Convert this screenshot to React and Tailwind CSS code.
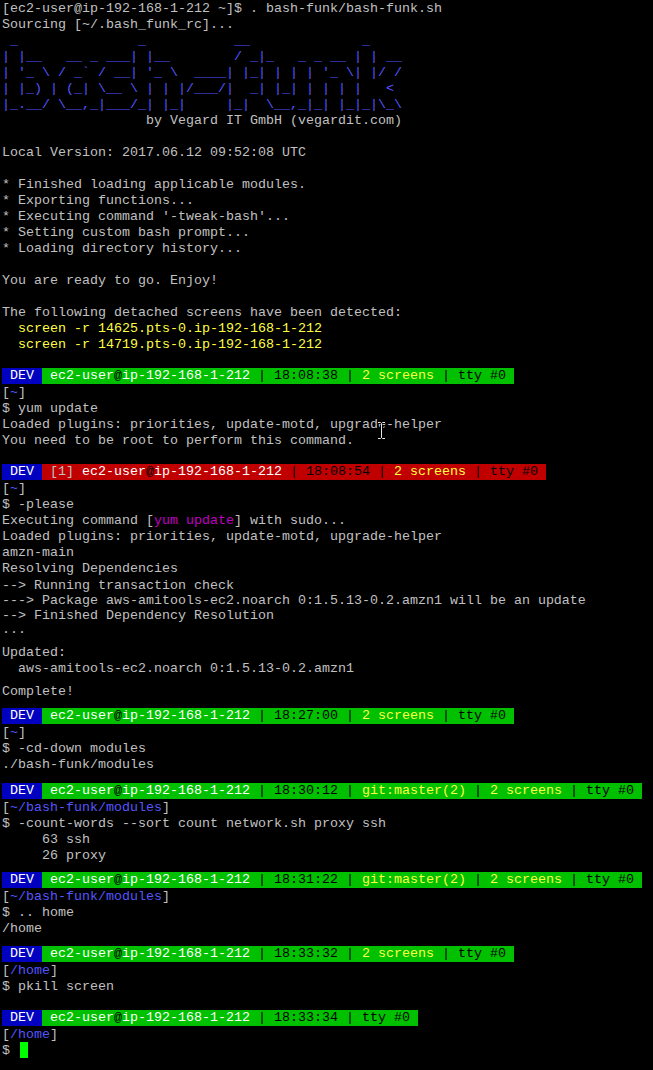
import React from 'react';

var GREY = 'text-[#c0c0c0]';
var BLUE = 'text-[#5555ff]';
var YELLOW = 'text-[#ffff40]';

var ART = [
  ' _               _           __              _    ',
  '| |__   __ _ ___| |__        / _|_   _ _ __ | | __',
  "| '_ \\ / _` / __| '_ \\  ____| |_| | | | '_ \\| |/ /",
  '| |_) | (_| \\__ \\ | | |/___/|  _| |_| | | | |   < ',
  '|_.__/ \\__,_|___/_| |_|     |_|  \\__,_|_| |_|_|\\_\\',
];

function Line({ h, children, className }) {
  return (
    <div className={'whitespace-pre pt-[1px] ' + (h || 'h-[16px]') + ' ' + (className || GREY)}>
      {children}
    </div>
  );
}

function Path({ dir }) {
  return (
    <Line>
      [<span className={BLUE}>{dir}</span>]
    </Line>
  );
}

function Bar({ time, git, screens, job, red }) {
  return (
    <div className="flex h-[16px] whitespace-pre">
      <span className="bg-[#0000c0] text-white"> DEV </span>
      <span className={red ? 'bg-[#c00000]' : 'bg-[#00c000]'}>
        {job && <span className={GREY}> [1]</span>}
        <span className="text-white"> ec2-user</span>
        <span className="text-black">@</span>
        <span className="text-white">ip-192-168-1-212</span>
        <span className="text-black">{' | ' + time + ' | '}</span>
        {git && <span className={YELLOW}>git:master(2)</span>}
        {git && <span className="text-black"> | </span>}
        {screens && <span className={YELLOW}>2 screens</span>}
        {screens && <span className="text-black"> | </span>}
        <span className="text-black">tty #0 </span>
      </span>
    </div>
  );
}

export default function App() {
  return (
    <div
      className="relative w-[653px] h-[1070px] overflow-hidden bg-black pl-[2px] text-[13.33px] leading-[16px]"
      style={{ fontFamily: '"Liberation Mono", "DejaVu Sans Mono", monospace' }}
    >
      <Line>[ec2-user@ip-192-168-1-212 ~]$ . bash-funk/bash-funk.sh</Line>
      <Line>Sourcing [~/.bash_funk_rc]...</Line>
      {ART.map(function(row, i) {
        return <Line key={i} className={BLUE}>{row}</Line>;
      })}
      <Line>{'                  by Vegard IT GmbH (vegardit.com)'}</Line>
      <Line />
      <Line>Local Version: 2017.06.12 09:52:08 UTC</Line>
      <Line />
      <Line>* Finished loading applicable modules.</Line>
      <Line>* Exporting functions...</Line>
      <Line>* Executing command '-tweak-bash'...</Line>
      <Line>* Setting custom bash prompt...</Line>
      <Line>* Loading directory history...</Line>
      <Line />
      <Line>You are ready to go. Enjoy!</Line>
      <Line />
      <Line>The following detached screens have been detected:</Line>
      <Line className={YELLOW}>{'  screen -r 14625.pts-0.ip-192-168-1-212'}</Line>
      <Line className={YELLOW}>{'  screen -r 14719.pts-0.ip-192-168-1-212'}</Line>
      <Line />

      <Bar time="18:08:38" screens />
      <Path dir="~" />
      <Line>$ yum update</Line>
      <Line>Loaded plugins: priorities, update-motd, upgrade-helper</Line>
      <Line>You need to be root to perform this command.</Line>
      <Line />

      <Bar time="18:08:54" screens job red />
      <Path dir="~" />
      <Line>$ -please</Line>
      <Line>
        Executing command [<span className="text-[#c000c0]">yum update</span>] with sudo...
      </Line>
      <Line>Loaded plugins: priorities, update-motd, upgrade-helper</Line>
      <Line>amzn-main</Line>
      <Line h="h-[17px]">Resolving Dependencies</Line>
      <Line h="h-[15px]">--&gt; Running transaction check</Line>
      <Line h="h-[15px]">---&gt; Package aws-amitools-ec2.noarch 0:1.5.13-0.2.amzn1 will be an update</Line>
      <Line h="h-[14px]">--&gt; Finished Dependency Resolution</Line>
      <Line h="h-[23px]">...</Line>
      <Line>Updated:</Line>
      <Line h="h-[23px]">{'  aws-amitools-ec2.noarch 0:1.5.13-0.2.amzn1'}</Line>
      <Line h="h-[25px]">Complete!</Line>

      <Bar time="18:27:00" screens />
      <Path dir="~" />
      <Line>$ -cd-down modules</Line>
      <Line h="h-[27px]">./bash-funk/modules</Line>

      <Bar time="18:30:12" git screens />
      <Path dir="~/bash-funk/modules" />
      <Line>$ -count-words --sort count network.sh proxy ssh</Line>
      <Line>{'     63 ssh'}</Line>
      <Line h="h-[25px]">{'     26 proxy'}</Line>

      <Bar time="18:31:22" git screens />
      <Path dir="~/bash-funk/modules" />
      <Line>$ .. home</Line>
      <Line h="h-[26px]">/home</Line>

      <Bar time="18:33:32" screens />
      <Path dir="/home" />
      <Line>$ pkill screen</Line>
      <Line />

      <Bar time="18:33:34" />
      <Path dir="/home" />
      <div className="flex h-[16px] whitespace-pre text-[#c0c0c0]">
        <span className="pt-[1px]">$ </span>
        <span className="ml-[2px] w-[8px] h-[16px] bg-[#00ff00]" />
      </div>

      {/* mouse text cursor resting over the output */}
      <svg className="absolute left-[377px] top-[421px]" width="9" height="19" viewBox="0 0 9 19">
        <path d="M1 1.5h2.5l1 1 1-1H8M4.5 2.5v14M1 17.5h2.5l1-1 1 1H8" fill="none" stroke="#000" strokeWidth="3" />
        <path d="M1 1.5h2.5l1 1 1-1H8M4.5 2.5v14M1 17.5h2.5l1-1 1 1H8" fill="none" stroke="#e8e8e8" strokeWidth="1" />
      </svg>
    </div>
  );
}
